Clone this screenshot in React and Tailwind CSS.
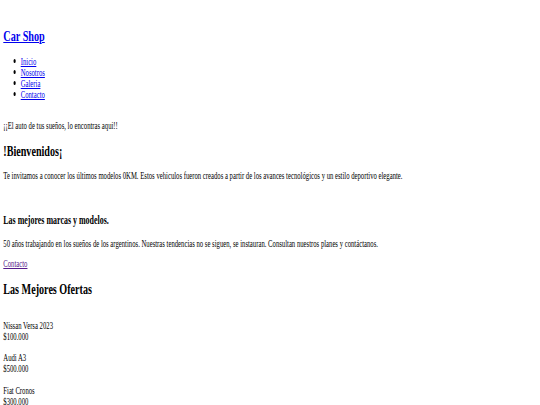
function Bullet({ children }) {
  return (
    <li className="flex items-center">
      <span className="w-[25.6px] shrink-0 flex items-center">
        <span className="ml-[15px] w-[3.6px] h-[3.6px] rounded-full bg-black"></span>
      </span>
      <a href="#" className="text-[#0000ee] underline">{children}</a>
    </li>
  );
}

export default function App() {
  return (
    <div className="bg-white w-[540px] h-[405px] overflow-hidden">
      <div
        className="w-[794px] origin-top-left scale-x-[0.68] pl-[4.85px] text-black text-[9.85px] leading-[11px] whitespace-nowrap"
        style={{ fontFamily: '"Liberation Serif", "Times New Roman", serif' }}
      >
        <header className="pt-[25px]">
          <h1 className="text-[15px] leading-[22px] font-bold">
            <a href="#" className="text-[#0000ee] underline">Car Shop</a>
          </h1>
          <nav className="mt-[8.5px]">
            <ul>
              <Bullet>Inicio</Bullet>
              <Bullet>Nosotros</Bullet>
              <Bullet>Galeria</Bullet>
              <Bullet>Contacto</Bullet>
            </ul>
          </nav>
        </header>
        <main>
          <p className="mt-[20px]">¡¡El auto de tus sueños, lo encontras aqui!!</p>
          <h2 className="mt-[12px] text-[14.9px] leading-[16.5px] font-bold">!Bienvenidos¡</h2>
          <p className="mt-[11px]">Te invitamos a conocer los últimos modelos 0KM. Estos vehiculos fueron creados a partir de los avances tecnológicos y un estilo deportivo elegante.</p>
          <h3 className="mt-[33px] text-[11.7px] leading-[13px] font-bold">Las mejores marcas y modelos.</h3>
          <p className="mt-[11px]">50 años trabajando en los sueños de los argentinos. Nuestras tendencias no se siguen, se instauran. Consultan nuestros planes y contáctanos.</p>
          <p className="mt-[9px]"><a href="#" className="text-[#551a8b] underline">Contacto</a></p>
          <h2 className="mt-[12px] text-[14.9px] leading-[16.5px] font-bold">Las Mejores Ofertas</h2>
          <div className="mt-[22px]">
            <p>Nissan Versa 2023<br />$100.000</p>
            <p className="mt-[10px]">Audi A3<br />$500.000</p>
            <p className="mt-[11px]">Fiat Cronos<br />$300.000</p>
          </div>
        </main>
      </div>
    </div>
  );
}
